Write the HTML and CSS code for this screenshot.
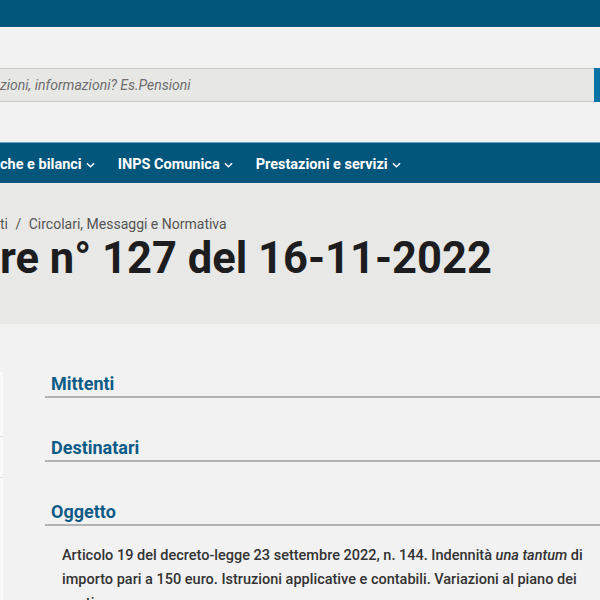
FILE: index.html
```html
<!DOCTYPE html>
<html lang="it">
<head>
  <meta charset="UTF-8" />
  <meta name="viewport" content="width=device-width, initial-scale=1.0"/>
  <title>Circolare n° 127 del 16-11-2022</title>
  <link rel="stylesheet" href="styles.css">
</head>
<body>
  <!-- Top bar -->
  <div class="topbar"></div>

  <!-- Search -->
  <div class="search-band">
    <div class="search-box">
      <input type="text" class="search-input" placeholder="zioni, informazioni? Es.Pensioni" />
      <button class="search-btn" aria-label="Cerca"></button>
    </div>
  </div>

  <!-- Main menu -->
  <nav class="mainnav">
    <a href="#">che e bilanci <svg class="chev" viewBox="0 0 10 6"><path d="M1 1l4 4 4-4"/></svg></a>
    <a href="#">INPS Comunica <svg class="chev" viewBox="0 0 10 6"><path d="M1 1l4 4 4-4"/></svg></a>
    <a href="#">Prestazioni e servizi <svg class="chev" viewBox="0 0 10 6"><path d="M1 1l4 4 4-4"/></svg></a>
  </nav>

  <!-- Page title -->
  <div class="hero">
    <div class="breadcrumb">ti <span class="sep">/</span> Circolari, Messaggi e Normativa</div>
    <h1 class="page-title">re n° 127 del 16-11-2022</h1>
  </div>

  <!-- Content -->
  <div class="content">
    <div class="side">
      <div class="side-item"></div>
      <div class="side-item"></div>
      <div class="side-item"></div>
    </div>

    <div class="doc">
      <section class="block">
        <h2 class="block-title">Mittenti</h2>
      </section>
      <section class="block">
        <h2 class="block-title">Destinatari</h2>
      </section>
      <section class="block">
        <h2 class="block-title">Oggetto</h2>
        <p class="block-text">Articolo 19 del decreto-legge 23 settembre 2022, n. 144. Indennità <em>una tantum</em> di importo pari a 150 euro. Istruzioni applicative e contabili. Variazioni al piano dei conti.</p>
      </section>
    </div>
  </div>
</body>
</html>
```

FILE: styles.css
```css
* {
  margin: 0;
  padding: 0;
  box-sizing: border-box;
  font-family: 'Roboto', 'Liberation Sans', sans-serif;
}

body {
  background-color: #f2f2f2;
  color: #1e1e1e;
  overflow: hidden;
  height: 600px;
}

.topbar {
  height: 27px;
  background-color: #02567c;
}

/* Search */
.search-band {
  padding: 41px 0 40px;
  background-color: #f2f2f2;
}

.search-box {
  display: flex;
  height: 34px;
}

.search-input {
  flex: 1;
  border: none;
  border-top: 1px solid #c9c9c7;
  border-bottom: 1px solid #c9c9c7;
  background-color: #e7e7e5;
  padding: 0;
  font-size: 14px;
  font-style: italic;
  color: #666;
  outline: none;
}

.search-input::placeholder {
  color: #6d6d6d;
}

.search-btn {
  width: 6px;
  border: none;
  background-color: #0a73a6;
}

/* Main nav */
.mainnav {
  height: 41px;
  background-color: #02567c;
  border-top: 1px solid #6fa2c0;
  display: flex;
  align-items: center;
  gap: 23px;
  padding-top: 3px;
}

.mainnav a {
  color: #fff;
  text-decoration: none;
  font-size: 14.5px;
  font-weight: 700;
  display: flex;
  align-items: center;
  gap: 4px;
}

.chev {
  width: 9px;
  height: 6px;
  fill: none;
  stroke: #fff;
  stroke-width: 1.6;
}

/* Title area */
.hero {
  background-color: #e8e8e6;
  height: 141px;
  padding-top: 32px;
}

.breadcrumb {
  font-size: 14px;
  color: #555;
  line-height: 18px;
}

.breadcrumb .sep {
  margin: 0 4px;
}

.page-title {
  font-size: 43.5px;
  font-weight: 700;
  color: #1d1d1f;
  line-height: 50px;
  margin-top: 1px;
}

/* Content */
.content {
  display: flex;
  padding-top: 48px;
}

.side {
  width: 3px;
  flex-shrink: 0;
  display: flex;
  flex-direction: column;
  gap: 1px;
  background-color: #dedede;
}

.side-item {
  height: 64px;
  background-color: #fafafa;
}

.side-item:nth-child(2) {
  height: 40px;
}

.side-item:last-child {
  height: 200px;
}

.doc {
  flex: 1;
  margin-left: 42px;
}

.block {
  margin-bottom: 38px;
}

.block-title {
  font-size: 18px;
  font-weight: 700;
  color: #0d5b87;
  padding-left: 6px;
  line-height: 24px;
  border-bottom: 2px solid #b3b3b3;
}

.block-text {
  font-size: 14.5px;
  font-weight: 500;
  color: #333;
  line-height: 24px;
  padding: 18px 8px 0 17px;
}
```
